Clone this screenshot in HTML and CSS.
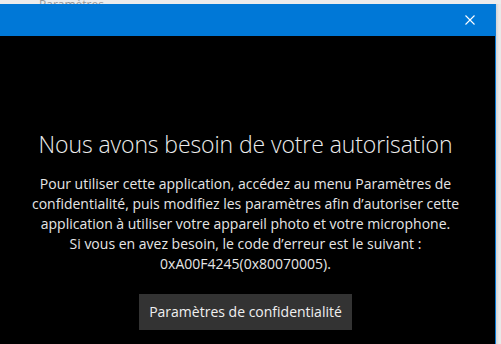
FILE: index.html
```html
<!DOCTYPE html>
<html lang="fr">
<head>
<meta charset="utf-8">
<link rel="stylesheet" href="styles.css">
</head>
<body>
<div class="desk">
  <div class="strip"><span class="strip-text">Paramètres</span></div>
  <div class="row">
    <div class="window">
      <div class="titlebar">
        <button class="close" aria-label="Fermer">
          <svg width="10" height="10" viewBox="0 0 10 10"><path d="M0.5 0.5 L9.5 9.5 M9.5 0.5 L0.5 9.5" stroke="#fff" stroke-width="1.1" fill="none"/></svg>
        </button>
      </div>
      <div class="content">
        <h1 class="title">Nous avons besoin de votre autorisation</h1>
        <p class="msg">Pour utiliser cette application, accédez au menu Paramètres de<br>confidentialité, puis modifiez les paramètres afin d’autoriser cette<br>application à utiliser votre appareil photo et votre microphone.<br>Si vous en avez besoin, le code d’erreur est le suivant :<br>0xA00F4245(0x80070005).</p>
        <button class="action">Paramètres de confidentialité</button>
      </div>
    </div>
    <div class="side"></div>
  </div>
</div>
</body>
</html>
```
FILE: styles.css
```css
html, body {
  margin: 0;
  padding: 0;
  width: 501px;
  height: 344px;
  overflow: hidden;
  background: #e9e9e9;
  font-family: "Open Sans", "Noto Sans", sans-serif;
}
.desk {
  display: flex;
  flex-direction: column;
  height: 344px;
}
.strip {
  height: 4px;
  overflow: hidden;
  background: #ececec;
  padding-left: 39px;
}
.strip-text {
  display: block;
  font-size: 12px;
  line-height: 12px;
  color: #9a9a9a;
  margin-top: -1px;
}
.row {
  flex: 1;
  display: flex;
}
.window {
  width: 495px;
  border-right: 1px solid #0a7bd6;
  display: flex;
  flex-direction: column;
  background: #000;
}
.side {
  flex: 1;
  background: linear-gradient(to right, #d4d4d4, #e9e9e9 3px);
}
.titlebar {
  height: 32px;
  background: #0078d7;
  display: flex;
  justify-content: flex-end;
  align-items: center;
}
.close {
  width: 46px;
  height: 32px;
  border: 0;
  padding: 0;
  margin-right: 2px;
  background: transparent;
  display: flex;
  align-items: center;
  justify-content: center;
}
.close svg { display: block; }
.content {
  flex: 1;
  display: flex;
  flex-direction: column;
  align-items: center;
  padding-right: 4px;
  color: #e8e8e8;
}
.title {
  margin: 92px 0 0;
  font-weight: 300;
  font-size: 23px;
  line-height: 32px;
  letter-spacing: -0.1px;
  color: #ededed;
  white-space: nowrap;
}
.msg {
  margin: 14px 0 0;
  font-size: 14px;
  line-height: 20px;
  text-align: center;
  color: #e6e6e6;
  white-space: nowrap;
}
.action {
  margin-top: 20px;
  width: 213px;
  height: 36px;
  border: 0;
  background: #333333;
  color: #f0f0f0;
  font-family: inherit;
  font-size: 14px;
  padding: 0 0 1px;
}
```
